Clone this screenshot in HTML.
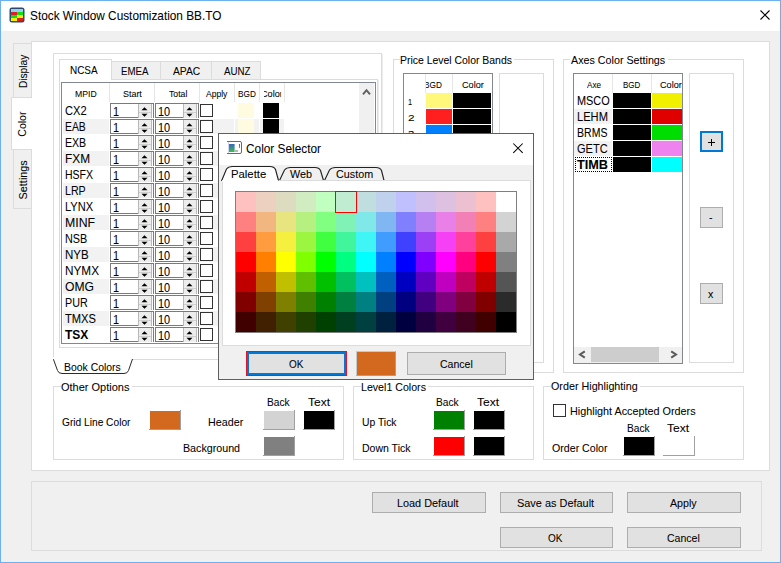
<!DOCTYPE html>
<html><head><meta charset="utf-8">
<style>
html,body{margin:0;padding:0;width:781px;height:563px;overflow:hidden;background:#fff;}
.a{position:absolute;box-sizing:border-box;}
.t{font-family:"Liberation Sans", sans-serif;white-space:nowrap;color:#000;-webkit-text-stroke:0.06px currentColor;}
svg.a{overflow:visible;}
</style></head><body>
<div class="a" style="left:0px;top:0px;width:781px;height:563px;background:#ffffff;border:1px solid #6cb0f2;"></div>
<div class="a" style="left:1px;top:31px;width:779px;height:531px;background:#f0f0f0;"></div>
<svg class="a" style="left:9px;top:7px" width="16" height="16" viewBox="0 0 16 16">
<rect x="0.5" y="0.5" width="15" height="15" rx="2.5" fill="#2b4a6b"/>
<rect x="2" y="2" width="12" height="3" fill="#8fd3ee"/>
<rect x="2" y="5" width="6" height="3" fill="#e02020"/><rect x="8" y="5" width="6" height="3" fill="#10e010"/>
<rect x="2" y="8" width="6" height="3" fill="#10e010"/><rect x="8" y="8" width="6" height="3" fill="#f8f000"/>
<rect x="2" y="11" width="6" height="3" fill="#f8f000"/><rect x="8" y="11" width="6" height="3" fill="#d02020"/>
</svg>
<div class="a t" style="left:29.72px;top:8px;font-size:12.6px;line-height:16px;color:#000;transform:scaleX(0.9377);transform-origin:0 0;">Stock Window Customization BB.TO</div>
<svg class="a" style="left:759px;top:9px" width="12" height="12" viewBox="0 0 12 12">
<path d="M1.5 1.5 L10.5 10.5 M10.5 1.5 L1.5 10.5" stroke="#000" stroke-width="1.1" fill="none"/></svg>
<div class="a" style="left:31px;top:41px;width:739px;height:430px;background:#ffffff;border:1px solid #dcdcdc;"></div>
<div class="a" style="left:13px;top:43px;width:19px;height:55px;background:#f0f0f0;border:1px solid #dcdcdc;"></div>
<div class="a" style="left:13px;top:149px;width:19px;height:60px;background:#f0f0f0;border:1px solid #dcdcdc;"></div>
<div class="a" style="left:11px;top:97px;width:21px;height:53px;background:#ffffff;border:1px solid #dcdcdc;border-right:none;"></div>
<div class="a t" style="left:0;top:0;font-size:11px;line-height:13.75px;transform:translate(16.61px,88.01px) rotate(-90deg) scaleX(0.9205);transform-origin:0 0;">Display</div>
<div class="a t" style="left:0;top:0;font-size:11px;line-height:13.75px;transform:translate(16.41px,136.73px) rotate(-90deg) scaleX(0.9600);transform-origin:0 0;">Color</div>
<div class="a t" style="left:0;top:0;font-size:11px;line-height:13.75px;transform:translate(16.71px,199.39px) rotate(-90deg) scaleX(0.9850);transform-origin:0 0;">Settings</div>
<div class="a" style="left:53px;top:53px;width:329px;height:307px;background:#ffffff;border:1px solid #dcdcdc;"></div>
<div class="a" style="left:382px;top:54px;width:1px;height:306px;background:#ececec;"></div>
<svg class="a" style="left:50px;top:357px" width="90" height="20" viewBox="0 0 90 20">
<path d="M3.5 2 L3.5 2.5 L7.5 13.5 Q8.5 16.5 12 16.5 L74 16.5 Q77.5 16.5 78.5 13.5 L82.5 2" fill="#fff" stroke="#2a2a2a" stroke-width="1"/>
<rect x="3" y="0" width="80" height="2" fill="#fff"/>
</svg>
<div class="a" style="left:54px;top:359px;width:29px;height:1px;background:#ffffff;"></div>
<div class="a t" style="left:63.67px;top:360px;font-size:11.2px;line-height:14px;color:#000;transform:scaleX(0.9314);transform-origin:0 0;">Book Colors</div>
<div class="a" style="left:59px;top:79px;width:319px;height:269px;background:#ffffff;border:1px solid #dcdcdc;"></div>
<div class="a" style="left:378px;top:80px;width:1px;height:268px;background:#ececec;"></div>
<div class="a" style="left:111px;top:61px;width:50px;height:19px;background:#f0f0f0;border:1px solid #dcdcdc;"></div>
<div class="a" style="left:160px;top:61px;width:52px;height:19px;background:#f0f0f0;border:1px solid #dcdcdc;"></div>
<div class="a" style="left:211px;top:61px;width:50px;height:19px;background:#f0f0f0;border:1px solid #dcdcdc;"></div>
<div class="a" style="left:59px;top:59px;width:53px;height:21px;background:#ffffff;border:1px solid #dcdcdc;border-bottom:none;"></div>
<div class="a t" style="left:69.70px;top:63px;font-size:11.2px;line-height:14px;color:#000;transform:scaleX(0.8879);transform-origin:0 0;">NCSA</div>
<div class="a t" style="left:120.72px;top:64px;font-size:11.2px;line-height:14px;color:#000;transform:scaleX(0.8669);transform-origin:0 0;">EMEA</div>
<div class="a t" style="left:172.70px;top:64px;font-size:11.2px;line-height:14px;color:#000;transform:scaleX(0.9202);transform-origin:0 0;">APAC</div>
<div class="a t" style="left:223.90px;top:64px;font-size:11.2px;line-height:14px;color:#000;transform:scaleX(0.8696);transform-origin:0 0;">AUNZ</div>
<div class="a" style="left:61px;top:82px;width:315px;height:262px;background:#ffffff;border:1px solid #828790;"></div>
<div class="a" style="left:109px;top:83px;width:1px;height:19px;background:#e6e6e6;"></div>
<div class="a" style="left:154px;top:83px;width:1px;height:19px;background:#e6e6e6;"></div>
<div class="a" style="left:199px;top:83px;width:1px;height:19px;background:#e6e6e6;"></div>
<div class="a" style="left:234px;top:83px;width:1px;height:19px;background:#e6e6e6;"></div>
<div class="a" style="left:259px;top:83px;width:1px;height:19px;background:#e6e6e6;"></div>
<div class="a" style="left:284px;top:83px;width:1px;height:19px;background:#e6e6e6;"></div>
<div class="a t" style="left:74.81px;top:88px;font-size:9.6px;line-height:12px;color:#000;transform:scaleX(0.9035);transform-origin:0 0;">MPID</div>
<div class="a t" style="left:122.90px;top:88px;font-size:9.6px;line-height:12px;color:#000;transform:scaleX(0.9304);transform-origin:0 0;">Start</div>
<div class="a t" style="left:168.83px;top:88px;font-size:9.6px;line-height:12px;color:#000;transform:scaleX(0.9053);transform-origin:0 0;">Total</div>
<div class="a t" style="left:206.30px;top:88px;font-size:9.6px;line-height:12px;color:#000;transform:scaleX(0.8917);transform-origin:0 0;">Apply</div>
<div class="a t" style="left:238.44px;top:88px;font-size:9.6px;line-height:12px;color:#000;transform:scaleX(0.8578);transform-origin:0 0;">BGD</div>
<div class="a" style="left:264px;top:83px;width:17px;height:18px;overflow:hidden">
<div class="a t" style="left:-2.86px;top:5px;font-size:9.6px;line-height:12px;color:#000;transform:scaleX(0.9519);transform-origin:0 0;">Color</div>
</div>
<div class="a t" style="left:65.04px;top:103px;font-size:12.6px;line-height:16px;color:#000;transform:scaleX(0.8818);transform-origin:0 0;">CX2</div>
<div class="a" style="left:110px;top:103px;width:44px;height:15px;background:#ffffff;border:1px solid #7a7a7a;border-bottom:none;"></div>
<div class="a" style="left:110px;top:117px;width:28px;height:1px;background:#7a7a7a;"></div>
<div class="a t" style="left:112.78px;top:104px;font-size:12.4px;line-height:16px;color:#000;transform:scaleX(0.8800);transform-origin:0 0;">1</div>
<div class="a" style="left:138px;top:104px;width:1px;height:14px;background:#b9b9b9;"></div>
<div class="a" style="left:139px;top:104px;width:12px;height:14px;background:#ededed;"></div>
<div class="a" style="left:151px;top:104px;width:1px;height:14px;background:#b9b9b9;"></div>
<div class="a" style="left:139px;top:112px;width:12px;height:1px;background:#d0d0d0;"></div>
<svg class="a" style="left:141px;top:107px" width="7" height="11" viewBox="0 0 7 11"><path d="M0.5 3.2 L3.5 0.2 L6.5 3.2 Z M0.5 6.8 L3.5 9.8 L6.5 6.8 Z" fill="#000"/></svg>
<div class="a" style="left:155px;top:103px;width:44px;height:15px;background:#ffffff;border:1px solid #7a7a7a;border-bottom:none;"></div>
<div class="a" style="left:155px;top:117px;width:28px;height:1px;background:#7a7a7a;"></div>
<div class="a t" style="left:157.78px;top:104px;font-size:12.4px;line-height:16px;color:#000;transform:scaleX(0.8800);transform-origin:0 0;">10</div>
<div class="a" style="left:183px;top:104px;width:1px;height:14px;background:#b9b9b9;"></div>
<div class="a" style="left:184px;top:104px;width:12px;height:14px;background:#ededed;"></div>
<div class="a" style="left:196px;top:104px;width:1px;height:14px;background:#b9b9b9;"></div>
<div class="a" style="left:184px;top:112px;width:12px;height:1px;background:#d0d0d0;"></div>
<svg class="a" style="left:186px;top:107px" width="7" height="11" viewBox="0 0 7 11"><path d="M0.5 3.2 L3.5 0.2 L6.5 3.2 Z M0.5 6.8 L3.5 9.8 L6.5 6.8 Z" fill="#000"/></svg>
<div class="a" style="left:200px;top:104px;width:13px;height:13px;background:#ffffff;border:1px solid #333333;"></div>
<div class="a" style="left:238px;top:103px;width:16px;height:15px;background:#fffbe1;"></div>
<div class="a" style="left:263px;top:103px;width:16px;height:15px;background:#000000;"></div>
<div class="a" style="left:63px;top:119px;width:221px;height:15px;background:#f2f2f2;"></div>
<div class="a" style="left:109px;top:119px;width:1px;height:15px;background:#ffffff;"></div>
<div class="a" style="left:154px;top:119px;width:1px;height:15px;background:#ffffff;"></div>
<div class="a" style="left:199px;top:119px;width:1px;height:15px;background:#ffffff;"></div>
<div class="a" style="left:234px;top:119px;width:1px;height:15px;background:#ffffff;"></div>
<div class="a" style="left:259px;top:119px;width:1px;height:15px;background:#ffffff;"></div>
<div class="a t" style="left:64.77px;top:119px;font-size:12.6px;line-height:16px;color:#000;transform:scaleX(0.8234);transform-origin:0 0;">EAB</div>
<div class="a" style="left:110px;top:119px;width:44px;height:15px;background:#ffffff;border:1px solid #7a7a7a;border-bottom:none;"></div>
<div class="a" style="left:110px;top:133px;width:28px;height:1px;background:#7a7a7a;"></div>
<div class="a t" style="left:112.78px;top:120px;font-size:12.4px;line-height:16px;color:#000;transform:scaleX(0.8800);transform-origin:0 0;">1</div>
<div class="a" style="left:138px;top:120px;width:1px;height:14px;background:#b9b9b9;"></div>
<div class="a" style="left:139px;top:120px;width:12px;height:14px;background:#ededed;"></div>
<div class="a" style="left:151px;top:120px;width:1px;height:14px;background:#b9b9b9;"></div>
<div class="a" style="left:139px;top:128px;width:12px;height:1px;background:#d0d0d0;"></div>
<svg class="a" style="left:141px;top:123px" width="7" height="11" viewBox="0 0 7 11"><path d="M0.5 3.2 L3.5 0.2 L6.5 3.2 Z M0.5 6.8 L3.5 9.8 L6.5 6.8 Z" fill="#000"/></svg>
<div class="a" style="left:155px;top:119px;width:44px;height:15px;background:#ffffff;border:1px solid #7a7a7a;border-bottom:none;"></div>
<div class="a" style="left:155px;top:133px;width:28px;height:1px;background:#7a7a7a;"></div>
<div class="a t" style="left:157.78px;top:120px;font-size:12.4px;line-height:16px;color:#000;transform:scaleX(0.8800);transform-origin:0 0;">10</div>
<div class="a" style="left:183px;top:120px;width:1px;height:14px;background:#b9b9b9;"></div>
<div class="a" style="left:184px;top:120px;width:12px;height:14px;background:#ededed;"></div>
<div class="a" style="left:196px;top:120px;width:1px;height:14px;background:#b9b9b9;"></div>
<div class="a" style="left:184px;top:128px;width:12px;height:1px;background:#d0d0d0;"></div>
<svg class="a" style="left:186px;top:123px" width="7" height="11" viewBox="0 0 7 11"><path d="M0.5 3.2 L3.5 0.2 L6.5 3.2 Z M0.5 6.8 L3.5 9.8 L6.5 6.8 Z" fill="#000"/></svg>
<div class="a" style="left:200px;top:120px;width:13px;height:13px;background:#ffffff;border:1px solid #333333;"></div>
<div class="a" style="left:238px;top:119px;width:16px;height:15px;background:#fffbe1;"></div>
<div class="a" style="left:263px;top:119px;width:16px;height:15px;background:#000000;"></div>
<div class="a t" style="left:64.75px;top:135px;font-size:12.6px;line-height:16px;color:#000;transform:scaleX(0.8403);transform-origin:0 0;">EXB</div>
<div class="a" style="left:110px;top:135px;width:44px;height:15px;background:#ffffff;border:1px solid #7a7a7a;border-bottom:none;"></div>
<div class="a" style="left:110px;top:149px;width:28px;height:1px;background:#7a7a7a;"></div>
<div class="a t" style="left:112.78px;top:136px;font-size:12.4px;line-height:16px;color:#000;transform:scaleX(0.8800);transform-origin:0 0;">1</div>
<div class="a" style="left:138px;top:136px;width:1px;height:14px;background:#b9b9b9;"></div>
<div class="a" style="left:139px;top:136px;width:12px;height:14px;background:#ededed;"></div>
<div class="a" style="left:151px;top:136px;width:1px;height:14px;background:#b9b9b9;"></div>
<div class="a" style="left:139px;top:144px;width:12px;height:1px;background:#d0d0d0;"></div>
<svg class="a" style="left:141px;top:139px" width="7" height="11" viewBox="0 0 7 11"><path d="M0.5 3.2 L3.5 0.2 L6.5 3.2 Z M0.5 6.8 L3.5 9.8 L6.5 6.8 Z" fill="#000"/></svg>
<div class="a" style="left:155px;top:135px;width:44px;height:15px;background:#ffffff;border:1px solid #7a7a7a;border-bottom:none;"></div>
<div class="a" style="left:155px;top:149px;width:28px;height:1px;background:#7a7a7a;"></div>
<div class="a t" style="left:157.78px;top:136px;font-size:12.4px;line-height:16px;color:#000;transform:scaleX(0.8800);transform-origin:0 0;">10</div>
<div class="a" style="left:183px;top:136px;width:1px;height:14px;background:#b9b9b9;"></div>
<div class="a" style="left:184px;top:136px;width:12px;height:14px;background:#ededed;"></div>
<div class="a" style="left:196px;top:136px;width:1px;height:14px;background:#b9b9b9;"></div>
<div class="a" style="left:184px;top:144px;width:12px;height:1px;background:#d0d0d0;"></div>
<svg class="a" style="left:186px;top:139px" width="7" height="11" viewBox="0 0 7 11"><path d="M0.5 3.2 L3.5 0.2 L6.5 3.2 Z M0.5 6.8 L3.5 9.8 L6.5 6.8 Z" fill="#000"/></svg>
<div class="a" style="left:200px;top:136px;width:13px;height:13px;background:#ffffff;border:1px solid #333333;"></div>
<div class="a" style="left:238px;top:135px;width:16px;height:15px;background:#fffbe1;"></div>
<div class="a" style="left:263px;top:135px;width:16px;height:15px;background:#000000;"></div>
<div class="a" style="left:63px;top:151px;width:221px;height:15px;background:#f2f2f2;"></div>
<div class="a" style="left:109px;top:151px;width:1px;height:15px;background:#ffffff;"></div>
<div class="a" style="left:154px;top:151px;width:1px;height:15px;background:#ffffff;"></div>
<div class="a" style="left:199px;top:151px;width:1px;height:15px;background:#ffffff;"></div>
<div class="a" style="left:234px;top:151px;width:1px;height:15px;background:#ffffff;"></div>
<div class="a" style="left:259px;top:151px;width:1px;height:15px;background:#ffffff;"></div>
<div class="a t" style="left:64.65px;top:151px;font-size:12.6px;line-height:16px;color:#000;transform:scaleX(0.9402);transform-origin:0 0;">FXM</div>
<div class="a" style="left:110px;top:151px;width:44px;height:15px;background:#ffffff;border:1px solid #7a7a7a;border-bottom:none;"></div>
<div class="a" style="left:110px;top:165px;width:28px;height:1px;background:#7a7a7a;"></div>
<div class="a t" style="left:112.78px;top:152px;font-size:12.4px;line-height:16px;color:#000;transform:scaleX(0.8800);transform-origin:0 0;">1</div>
<div class="a" style="left:138px;top:152px;width:1px;height:14px;background:#b9b9b9;"></div>
<div class="a" style="left:139px;top:152px;width:12px;height:14px;background:#ededed;"></div>
<div class="a" style="left:151px;top:152px;width:1px;height:14px;background:#b9b9b9;"></div>
<div class="a" style="left:139px;top:160px;width:12px;height:1px;background:#d0d0d0;"></div>
<svg class="a" style="left:141px;top:155px" width="7" height="11" viewBox="0 0 7 11"><path d="M0.5 3.2 L3.5 0.2 L6.5 3.2 Z M0.5 6.8 L3.5 9.8 L6.5 6.8 Z" fill="#000"/></svg>
<div class="a" style="left:155px;top:151px;width:44px;height:15px;background:#ffffff;border:1px solid #7a7a7a;border-bottom:none;"></div>
<div class="a" style="left:155px;top:165px;width:28px;height:1px;background:#7a7a7a;"></div>
<div class="a t" style="left:157.78px;top:152px;font-size:12.4px;line-height:16px;color:#000;transform:scaleX(0.8800);transform-origin:0 0;">10</div>
<div class="a" style="left:183px;top:152px;width:1px;height:14px;background:#b9b9b9;"></div>
<div class="a" style="left:184px;top:152px;width:12px;height:14px;background:#ededed;"></div>
<div class="a" style="left:196px;top:152px;width:1px;height:14px;background:#b9b9b9;"></div>
<div class="a" style="left:184px;top:160px;width:12px;height:1px;background:#d0d0d0;"></div>
<svg class="a" style="left:186px;top:155px" width="7" height="11" viewBox="0 0 7 11"><path d="M0.5 3.2 L3.5 0.2 L6.5 3.2 Z M0.5 6.8 L3.5 9.8 L6.5 6.8 Z" fill="#000"/></svg>
<div class="a" style="left:200px;top:152px;width:13px;height:13px;background:#ffffff;border:1px solid #333333;"></div>
<div class="a" style="left:238px;top:151px;width:16px;height:15px;background:#fffbe1;"></div>
<div class="a" style="left:263px;top:151px;width:16px;height:15px;background:#000000;"></div>
<div class="a t" style="left:64.76px;top:167px;font-size:12.6px;line-height:16px;color:#000;transform:scaleX(0.8354);transform-origin:0 0;">HSFX</div>
<div class="a" style="left:110px;top:167px;width:44px;height:15px;background:#ffffff;border:1px solid #7a7a7a;border-bottom:none;"></div>
<div class="a" style="left:110px;top:181px;width:28px;height:1px;background:#7a7a7a;"></div>
<div class="a t" style="left:112.78px;top:168px;font-size:12.4px;line-height:16px;color:#000;transform:scaleX(0.8800);transform-origin:0 0;">1</div>
<div class="a" style="left:138px;top:168px;width:1px;height:14px;background:#b9b9b9;"></div>
<div class="a" style="left:139px;top:168px;width:12px;height:14px;background:#ededed;"></div>
<div class="a" style="left:151px;top:168px;width:1px;height:14px;background:#b9b9b9;"></div>
<div class="a" style="left:139px;top:176px;width:12px;height:1px;background:#d0d0d0;"></div>
<svg class="a" style="left:141px;top:171px" width="7" height="11" viewBox="0 0 7 11"><path d="M0.5 3.2 L3.5 0.2 L6.5 3.2 Z M0.5 6.8 L3.5 9.8 L6.5 6.8 Z" fill="#000"/></svg>
<div class="a" style="left:155px;top:167px;width:44px;height:15px;background:#ffffff;border:1px solid #7a7a7a;border-bottom:none;"></div>
<div class="a" style="left:155px;top:181px;width:28px;height:1px;background:#7a7a7a;"></div>
<div class="a t" style="left:157.78px;top:168px;font-size:12.4px;line-height:16px;color:#000;transform:scaleX(0.8800);transform-origin:0 0;">10</div>
<div class="a" style="left:183px;top:168px;width:1px;height:14px;background:#b9b9b9;"></div>
<div class="a" style="left:184px;top:168px;width:12px;height:14px;background:#ededed;"></div>
<div class="a" style="left:196px;top:168px;width:1px;height:14px;background:#b9b9b9;"></div>
<div class="a" style="left:184px;top:176px;width:12px;height:1px;background:#d0d0d0;"></div>
<svg class="a" style="left:186px;top:171px" width="7" height="11" viewBox="0 0 7 11"><path d="M0.5 3.2 L3.5 0.2 L6.5 3.2 Z M0.5 6.8 L3.5 9.8 L6.5 6.8 Z" fill="#000"/></svg>
<div class="a" style="left:200px;top:168px;width:13px;height:13px;background:#ffffff;border:1px solid #333333;"></div>
<div class="a" style="left:238px;top:167px;width:16px;height:15px;background:#fffbe1;"></div>
<div class="a" style="left:263px;top:167px;width:16px;height:15px;background:#000000;"></div>
<div class="a" style="left:63px;top:183px;width:221px;height:15px;background:#f2f2f2;"></div>
<div class="a" style="left:109px;top:183px;width:1px;height:15px;background:#ffffff;"></div>
<div class="a" style="left:154px;top:183px;width:1px;height:15px;background:#ffffff;"></div>
<div class="a" style="left:199px;top:183px;width:1px;height:15px;background:#ffffff;"></div>
<div class="a" style="left:234px;top:183px;width:1px;height:15px;background:#ffffff;"></div>
<div class="a" style="left:259px;top:183px;width:1px;height:15px;background:#ffffff;"></div>
<div class="a t" style="left:64.75px;top:183px;font-size:12.6px;line-height:16px;color:#000;transform:scaleX(0.8439);transform-origin:0 0;">LRP</div>
<div class="a" style="left:110px;top:183px;width:44px;height:15px;background:#ffffff;border:1px solid #7a7a7a;border-bottom:none;"></div>
<div class="a" style="left:110px;top:197px;width:28px;height:1px;background:#7a7a7a;"></div>
<div class="a t" style="left:112.78px;top:184px;font-size:12.4px;line-height:16px;color:#000;transform:scaleX(0.8800);transform-origin:0 0;">1</div>
<div class="a" style="left:138px;top:184px;width:1px;height:14px;background:#b9b9b9;"></div>
<div class="a" style="left:139px;top:184px;width:12px;height:14px;background:#ededed;"></div>
<div class="a" style="left:151px;top:184px;width:1px;height:14px;background:#b9b9b9;"></div>
<div class="a" style="left:139px;top:192px;width:12px;height:1px;background:#d0d0d0;"></div>
<svg class="a" style="left:141px;top:187px" width="7" height="11" viewBox="0 0 7 11"><path d="M0.5 3.2 L3.5 0.2 L6.5 3.2 Z M0.5 6.8 L3.5 9.8 L6.5 6.8 Z" fill="#000"/></svg>
<div class="a" style="left:155px;top:183px;width:44px;height:15px;background:#ffffff;border:1px solid #7a7a7a;border-bottom:none;"></div>
<div class="a" style="left:155px;top:197px;width:28px;height:1px;background:#7a7a7a;"></div>
<div class="a t" style="left:157.78px;top:184px;font-size:12.4px;line-height:16px;color:#000;transform:scaleX(0.8800);transform-origin:0 0;">10</div>
<div class="a" style="left:183px;top:184px;width:1px;height:14px;background:#b9b9b9;"></div>
<div class="a" style="left:184px;top:184px;width:12px;height:14px;background:#ededed;"></div>
<div class="a" style="left:196px;top:184px;width:1px;height:14px;background:#b9b9b9;"></div>
<div class="a" style="left:184px;top:192px;width:12px;height:1px;background:#d0d0d0;"></div>
<svg class="a" style="left:186px;top:187px" width="7" height="11" viewBox="0 0 7 11"><path d="M0.5 3.2 L3.5 0.2 L6.5 3.2 Z M0.5 6.8 L3.5 9.8 L6.5 6.8 Z" fill="#000"/></svg>
<div class="a" style="left:200px;top:184px;width:13px;height:13px;background:#ffffff;border:1px solid #333333;"></div>
<div class="a" style="left:238px;top:183px;width:16px;height:15px;background:#fffbe1;"></div>
<div class="a" style="left:263px;top:183px;width:16px;height:15px;background:#000000;"></div>
<div class="a t" style="left:64.71px;top:199px;font-size:12.6px;line-height:16px;color:#000;transform:scaleX(0.8800);transform-origin:0 0;">LYNX</div>
<div class="a" style="left:110px;top:199px;width:44px;height:15px;background:#ffffff;border:1px solid #7a7a7a;border-bottom:none;"></div>
<div class="a" style="left:110px;top:213px;width:28px;height:1px;background:#7a7a7a;"></div>
<div class="a t" style="left:112.78px;top:200px;font-size:12.4px;line-height:16px;color:#000;transform:scaleX(0.8800);transform-origin:0 0;">1</div>
<div class="a" style="left:138px;top:200px;width:1px;height:14px;background:#b9b9b9;"></div>
<div class="a" style="left:139px;top:200px;width:12px;height:14px;background:#ededed;"></div>
<div class="a" style="left:151px;top:200px;width:1px;height:14px;background:#b9b9b9;"></div>
<div class="a" style="left:139px;top:208px;width:12px;height:1px;background:#d0d0d0;"></div>
<svg class="a" style="left:141px;top:203px" width="7" height="11" viewBox="0 0 7 11"><path d="M0.5 3.2 L3.5 0.2 L6.5 3.2 Z M0.5 6.8 L3.5 9.8 L6.5 6.8 Z" fill="#000"/></svg>
<div class="a" style="left:155px;top:199px;width:44px;height:15px;background:#ffffff;border:1px solid #7a7a7a;border-bottom:none;"></div>
<div class="a" style="left:155px;top:213px;width:28px;height:1px;background:#7a7a7a;"></div>
<div class="a t" style="left:157.78px;top:200px;font-size:12.4px;line-height:16px;color:#000;transform:scaleX(0.8800);transform-origin:0 0;">10</div>
<div class="a" style="left:183px;top:200px;width:1px;height:14px;background:#b9b9b9;"></div>
<div class="a" style="left:184px;top:200px;width:12px;height:14px;background:#ededed;"></div>
<div class="a" style="left:196px;top:200px;width:1px;height:14px;background:#b9b9b9;"></div>
<div class="a" style="left:184px;top:208px;width:12px;height:1px;background:#d0d0d0;"></div>
<svg class="a" style="left:186px;top:203px" width="7" height="11" viewBox="0 0 7 11"><path d="M0.5 3.2 L3.5 0.2 L6.5 3.2 Z M0.5 6.8 L3.5 9.8 L6.5 6.8 Z" fill="#000"/></svg>
<div class="a" style="left:200px;top:200px;width:13px;height:13px;background:#ffffff;border:1px solid #333333;"></div>
<div class="a" style="left:238px;top:199px;width:16px;height:15px;background:#fffbe1;"></div>
<div class="a" style="left:263px;top:199px;width:16px;height:15px;background:#000000;"></div>
<div class="a" style="left:63px;top:215px;width:221px;height:15px;background:#f2f2f2;"></div>
<div class="a" style="left:109px;top:215px;width:1px;height:15px;background:#ffffff;"></div>
<div class="a" style="left:154px;top:215px;width:1px;height:15px;background:#ffffff;"></div>
<div class="a" style="left:199px;top:215px;width:1px;height:15px;background:#ffffff;"></div>
<div class="a" style="left:234px;top:215px;width:1px;height:15px;background:#ffffff;"></div>
<div class="a" style="left:259px;top:215px;width:1px;height:15px;background:#ffffff;"></div>
<div class="a t" style="left:64.62px;top:215px;font-size:12.6px;line-height:16px;color:#000;transform:scaleX(0.9763);transform-origin:0 0;">MINF</div>
<div class="a" style="left:110px;top:215px;width:44px;height:15px;background:#ffffff;border:1px solid #7a7a7a;border-bottom:none;"></div>
<div class="a" style="left:110px;top:229px;width:28px;height:1px;background:#7a7a7a;"></div>
<div class="a t" style="left:112.78px;top:216px;font-size:12.4px;line-height:16px;color:#000;transform:scaleX(0.8800);transform-origin:0 0;">1</div>
<div class="a" style="left:138px;top:216px;width:1px;height:14px;background:#b9b9b9;"></div>
<div class="a" style="left:139px;top:216px;width:12px;height:14px;background:#ededed;"></div>
<div class="a" style="left:151px;top:216px;width:1px;height:14px;background:#b9b9b9;"></div>
<div class="a" style="left:139px;top:224px;width:12px;height:1px;background:#d0d0d0;"></div>
<svg class="a" style="left:141px;top:219px" width="7" height="11" viewBox="0 0 7 11"><path d="M0.5 3.2 L3.5 0.2 L6.5 3.2 Z M0.5 6.8 L3.5 9.8 L6.5 6.8 Z" fill="#000"/></svg>
<div class="a" style="left:155px;top:215px;width:44px;height:15px;background:#ffffff;border:1px solid #7a7a7a;border-bottom:none;"></div>
<div class="a" style="left:155px;top:229px;width:28px;height:1px;background:#7a7a7a;"></div>
<div class="a t" style="left:157.78px;top:216px;font-size:12.4px;line-height:16px;color:#000;transform:scaleX(0.8800);transform-origin:0 0;">10</div>
<div class="a" style="left:183px;top:216px;width:1px;height:14px;background:#b9b9b9;"></div>
<div class="a" style="left:184px;top:216px;width:12px;height:14px;background:#ededed;"></div>
<div class="a" style="left:196px;top:216px;width:1px;height:14px;background:#b9b9b9;"></div>
<div class="a" style="left:184px;top:224px;width:12px;height:1px;background:#d0d0d0;"></div>
<svg class="a" style="left:186px;top:219px" width="7" height="11" viewBox="0 0 7 11"><path d="M0.5 3.2 L3.5 0.2 L6.5 3.2 Z M0.5 6.8 L3.5 9.8 L6.5 6.8 Z" fill="#000"/></svg>
<div class="a" style="left:200px;top:216px;width:13px;height:13px;background:#ffffff;border:1px solid #333333;"></div>
<div class="a" style="left:238px;top:215px;width:16px;height:15px;background:#fffbe1;"></div>
<div class="a" style="left:263px;top:215px;width:16px;height:15px;background:#000000;"></div>
<div class="a t" style="left:64.74px;top:231px;font-size:12.6px;line-height:16px;color:#000;transform:scaleX(0.8576);transform-origin:0 0;">NSB</div>
<div class="a" style="left:110px;top:231px;width:44px;height:15px;background:#ffffff;border:1px solid #7a7a7a;border-bottom:none;"></div>
<div class="a" style="left:110px;top:245px;width:28px;height:1px;background:#7a7a7a;"></div>
<div class="a t" style="left:112.78px;top:232px;font-size:12.4px;line-height:16px;color:#000;transform:scaleX(0.8800);transform-origin:0 0;">1</div>
<div class="a" style="left:138px;top:232px;width:1px;height:14px;background:#b9b9b9;"></div>
<div class="a" style="left:139px;top:232px;width:12px;height:14px;background:#ededed;"></div>
<div class="a" style="left:151px;top:232px;width:1px;height:14px;background:#b9b9b9;"></div>
<div class="a" style="left:139px;top:240px;width:12px;height:1px;background:#d0d0d0;"></div>
<svg class="a" style="left:141px;top:235px" width="7" height="11" viewBox="0 0 7 11"><path d="M0.5 3.2 L3.5 0.2 L6.5 3.2 Z M0.5 6.8 L3.5 9.8 L6.5 6.8 Z" fill="#000"/></svg>
<div class="a" style="left:155px;top:231px;width:44px;height:15px;background:#ffffff;border:1px solid #7a7a7a;border-bottom:none;"></div>
<div class="a" style="left:155px;top:245px;width:28px;height:1px;background:#7a7a7a;"></div>
<div class="a t" style="left:157.78px;top:232px;font-size:12.4px;line-height:16px;color:#000;transform:scaleX(0.8800);transform-origin:0 0;">10</div>
<div class="a" style="left:183px;top:232px;width:1px;height:14px;background:#b9b9b9;"></div>
<div class="a" style="left:184px;top:232px;width:12px;height:14px;background:#ededed;"></div>
<div class="a" style="left:196px;top:232px;width:1px;height:14px;background:#b9b9b9;"></div>
<div class="a" style="left:184px;top:240px;width:12px;height:1px;background:#d0d0d0;"></div>
<svg class="a" style="left:186px;top:235px" width="7" height="11" viewBox="0 0 7 11"><path d="M0.5 3.2 L3.5 0.2 L6.5 3.2 Z M0.5 6.8 L3.5 9.8 L6.5 6.8 Z" fill="#000"/></svg>
<div class="a" style="left:200px;top:232px;width:13px;height:13px;background:#ffffff;border:1px solid #333333;"></div>
<div class="a" style="left:238px;top:231px;width:16px;height:15px;background:#fffbe1;"></div>
<div class="a" style="left:263px;top:231px;width:16px;height:15px;background:#000000;"></div>
<div class="a" style="left:63px;top:247px;width:221px;height:15px;background:#f2f2f2;"></div>
<div class="a" style="left:109px;top:247px;width:1px;height:15px;background:#ffffff;"></div>
<div class="a" style="left:154px;top:247px;width:1px;height:15px;background:#ffffff;"></div>
<div class="a" style="left:199px;top:247px;width:1px;height:15px;background:#ffffff;"></div>
<div class="a" style="left:234px;top:247px;width:1px;height:15px;background:#ffffff;"></div>
<div class="a" style="left:259px;top:247px;width:1px;height:15px;background:#ffffff;"></div>
<div class="a t" style="left:64.68px;top:247px;font-size:12.6px;line-height:16px;color:#000;transform:scaleX(0.9153);transform-origin:0 0;">NYB</div>
<div class="a" style="left:110px;top:247px;width:44px;height:15px;background:#ffffff;border:1px solid #7a7a7a;border-bottom:none;"></div>
<div class="a" style="left:110px;top:261px;width:28px;height:1px;background:#7a7a7a;"></div>
<div class="a t" style="left:112.78px;top:248px;font-size:12.4px;line-height:16px;color:#000;transform:scaleX(0.8800);transform-origin:0 0;">1</div>
<div class="a" style="left:138px;top:248px;width:1px;height:14px;background:#b9b9b9;"></div>
<div class="a" style="left:139px;top:248px;width:12px;height:14px;background:#ededed;"></div>
<div class="a" style="left:151px;top:248px;width:1px;height:14px;background:#b9b9b9;"></div>
<div class="a" style="left:139px;top:256px;width:12px;height:1px;background:#d0d0d0;"></div>
<svg class="a" style="left:141px;top:251px" width="7" height="11" viewBox="0 0 7 11"><path d="M0.5 3.2 L3.5 0.2 L6.5 3.2 Z M0.5 6.8 L3.5 9.8 L6.5 6.8 Z" fill="#000"/></svg>
<div class="a" style="left:155px;top:247px;width:44px;height:15px;background:#ffffff;border:1px solid #7a7a7a;border-bottom:none;"></div>
<div class="a" style="left:155px;top:261px;width:28px;height:1px;background:#7a7a7a;"></div>
<div class="a t" style="left:157.78px;top:248px;font-size:12.4px;line-height:16px;color:#000;transform:scaleX(0.8800);transform-origin:0 0;">10</div>
<div class="a" style="left:183px;top:248px;width:1px;height:14px;background:#b9b9b9;"></div>
<div class="a" style="left:184px;top:248px;width:12px;height:14px;background:#ededed;"></div>
<div class="a" style="left:196px;top:248px;width:1px;height:14px;background:#b9b9b9;"></div>
<div class="a" style="left:184px;top:256px;width:12px;height:1px;background:#d0d0d0;"></div>
<svg class="a" style="left:186px;top:251px" width="7" height="11" viewBox="0 0 7 11"><path d="M0.5 3.2 L3.5 0.2 L6.5 3.2 Z M0.5 6.8 L3.5 9.8 L6.5 6.8 Z" fill="#000"/></svg>
<div class="a" style="left:200px;top:248px;width:13px;height:13px;background:#ffffff;border:1px solid #333333;"></div>
<div class="a" style="left:238px;top:247px;width:16px;height:15px;background:#fffbe1;"></div>
<div class="a" style="left:263px;top:247px;width:16px;height:15px;background:#000000;"></div>
<div class="a t" style="left:64.66px;top:263px;font-size:12.6px;line-height:16px;color:#000;transform:scaleX(0.9347);transform-origin:0 0;">NYMX</div>
<div class="a" style="left:110px;top:263px;width:44px;height:15px;background:#ffffff;border:1px solid #7a7a7a;border-bottom:none;"></div>
<div class="a" style="left:110px;top:277px;width:28px;height:1px;background:#7a7a7a;"></div>
<div class="a t" style="left:112.78px;top:264px;font-size:12.4px;line-height:16px;color:#000;transform:scaleX(0.8800);transform-origin:0 0;">1</div>
<div class="a" style="left:138px;top:264px;width:1px;height:14px;background:#b9b9b9;"></div>
<div class="a" style="left:139px;top:264px;width:12px;height:14px;background:#ededed;"></div>
<div class="a" style="left:151px;top:264px;width:1px;height:14px;background:#b9b9b9;"></div>
<div class="a" style="left:139px;top:272px;width:12px;height:1px;background:#d0d0d0;"></div>
<svg class="a" style="left:141px;top:267px" width="7" height="11" viewBox="0 0 7 11"><path d="M0.5 3.2 L3.5 0.2 L6.5 3.2 Z M0.5 6.8 L3.5 9.8 L6.5 6.8 Z" fill="#000"/></svg>
<div class="a" style="left:155px;top:263px;width:44px;height:15px;background:#ffffff;border:1px solid #7a7a7a;border-bottom:none;"></div>
<div class="a" style="left:155px;top:277px;width:28px;height:1px;background:#7a7a7a;"></div>
<div class="a t" style="left:157.78px;top:264px;font-size:12.4px;line-height:16px;color:#000;transform:scaleX(0.8800);transform-origin:0 0;">10</div>
<div class="a" style="left:183px;top:264px;width:1px;height:14px;background:#b9b9b9;"></div>
<div class="a" style="left:184px;top:264px;width:12px;height:14px;background:#ededed;"></div>
<div class="a" style="left:196px;top:264px;width:1px;height:14px;background:#b9b9b9;"></div>
<div class="a" style="left:184px;top:272px;width:12px;height:1px;background:#d0d0d0;"></div>
<svg class="a" style="left:186px;top:267px" width="7" height="11" viewBox="0 0 7 11"><path d="M0.5 3.2 L3.5 0.2 L6.5 3.2 Z M0.5 6.8 L3.5 9.8 L6.5 6.8 Z" fill="#000"/></svg>
<div class="a" style="left:200px;top:264px;width:13px;height:13px;background:#ffffff;border:1px solid #333333;"></div>
<div class="a" style="left:238px;top:263px;width:16px;height:15px;background:#fffbe1;"></div>
<div class="a" style="left:263px;top:263px;width:16px;height:15px;background:#000000;"></div>
<div class="a" style="left:63px;top:279px;width:221px;height:15px;background:#f2f2f2;"></div>
<div class="a" style="left:109px;top:279px;width:1px;height:15px;background:#ffffff;"></div>
<div class="a" style="left:154px;top:279px;width:1px;height:15px;background:#ffffff;"></div>
<div class="a" style="left:199px;top:279px;width:1px;height:15px;background:#ffffff;"></div>
<div class="a" style="left:234px;top:279px;width:1px;height:15px;background:#ffffff;"></div>
<div class="a" style="left:259px;top:279px;width:1px;height:15px;background:#ffffff;"></div>
<div class="a t" style="left:65.05px;top:279px;font-size:12.6px;line-height:16px;color:#000;transform:scaleX(0.9615);transform-origin:0 0;">OMG</div>
<div class="a" style="left:110px;top:279px;width:44px;height:15px;background:#ffffff;border:1px solid #7a7a7a;border-bottom:none;"></div>
<div class="a" style="left:110px;top:293px;width:28px;height:1px;background:#7a7a7a;"></div>
<div class="a t" style="left:112.78px;top:280px;font-size:12.4px;line-height:16px;color:#000;transform:scaleX(0.8800);transform-origin:0 0;">1</div>
<div class="a" style="left:138px;top:280px;width:1px;height:14px;background:#b9b9b9;"></div>
<div class="a" style="left:139px;top:280px;width:12px;height:14px;background:#ededed;"></div>
<div class="a" style="left:151px;top:280px;width:1px;height:14px;background:#b9b9b9;"></div>
<div class="a" style="left:139px;top:288px;width:12px;height:1px;background:#d0d0d0;"></div>
<svg class="a" style="left:141px;top:283px" width="7" height="11" viewBox="0 0 7 11"><path d="M0.5 3.2 L3.5 0.2 L6.5 3.2 Z M0.5 6.8 L3.5 9.8 L6.5 6.8 Z" fill="#000"/></svg>
<div class="a" style="left:155px;top:279px;width:44px;height:15px;background:#ffffff;border:1px solid #7a7a7a;border-bottom:none;"></div>
<div class="a" style="left:155px;top:293px;width:28px;height:1px;background:#7a7a7a;"></div>
<div class="a t" style="left:157.78px;top:280px;font-size:12.4px;line-height:16px;color:#000;transform:scaleX(0.8800);transform-origin:0 0;">10</div>
<div class="a" style="left:183px;top:280px;width:1px;height:14px;background:#b9b9b9;"></div>
<div class="a" style="left:184px;top:280px;width:12px;height:14px;background:#ededed;"></div>
<div class="a" style="left:196px;top:280px;width:1px;height:14px;background:#b9b9b9;"></div>
<div class="a" style="left:184px;top:288px;width:12px;height:1px;background:#d0d0d0;"></div>
<svg class="a" style="left:186px;top:283px" width="7" height="11" viewBox="0 0 7 11"><path d="M0.5 3.2 L3.5 0.2 L6.5 3.2 Z M0.5 6.8 L3.5 9.8 L6.5 6.8 Z" fill="#000"/></svg>
<div class="a" style="left:200px;top:280px;width:13px;height:13px;background:#ffffff;border:1px solid #333333;"></div>
<div class="a" style="left:238px;top:279px;width:16px;height:15px;background:#fffbe1;"></div>
<div class="a" style="left:263px;top:279px;width:16px;height:15px;background:#000000;"></div>
<div class="a t" style="left:64.74px;top:295px;font-size:12.6px;line-height:16px;color:#000;transform:scaleX(0.8516);transform-origin:0 0;">PUR</div>
<div class="a" style="left:110px;top:295px;width:44px;height:15px;background:#ffffff;border:1px solid #7a7a7a;border-bottom:none;"></div>
<div class="a" style="left:110px;top:309px;width:28px;height:1px;background:#7a7a7a;"></div>
<div class="a t" style="left:112.78px;top:296px;font-size:12.4px;line-height:16px;color:#000;transform:scaleX(0.8800);transform-origin:0 0;">1</div>
<div class="a" style="left:138px;top:296px;width:1px;height:14px;background:#b9b9b9;"></div>
<div class="a" style="left:139px;top:296px;width:12px;height:14px;background:#ededed;"></div>
<div class="a" style="left:151px;top:296px;width:1px;height:14px;background:#b9b9b9;"></div>
<div class="a" style="left:139px;top:304px;width:12px;height:1px;background:#d0d0d0;"></div>
<svg class="a" style="left:141px;top:299px" width="7" height="11" viewBox="0 0 7 11"><path d="M0.5 3.2 L3.5 0.2 L6.5 3.2 Z M0.5 6.8 L3.5 9.8 L6.5 6.8 Z" fill="#000"/></svg>
<div class="a" style="left:155px;top:295px;width:44px;height:15px;background:#ffffff;border:1px solid #7a7a7a;border-bottom:none;"></div>
<div class="a" style="left:155px;top:309px;width:28px;height:1px;background:#7a7a7a;"></div>
<div class="a t" style="left:157.78px;top:296px;font-size:12.4px;line-height:16px;color:#000;transform:scaleX(0.8800);transform-origin:0 0;">10</div>
<div class="a" style="left:183px;top:296px;width:1px;height:14px;background:#b9b9b9;"></div>
<div class="a" style="left:184px;top:296px;width:12px;height:14px;background:#ededed;"></div>
<div class="a" style="left:196px;top:296px;width:1px;height:14px;background:#b9b9b9;"></div>
<div class="a" style="left:184px;top:304px;width:12px;height:1px;background:#d0d0d0;"></div>
<svg class="a" style="left:186px;top:299px" width="7" height="11" viewBox="0 0 7 11"><path d="M0.5 3.2 L3.5 0.2 L6.5 3.2 Z M0.5 6.8 L3.5 9.8 L6.5 6.8 Z" fill="#000"/></svg>
<div class="a" style="left:200px;top:296px;width:13px;height:13px;background:#ffffff;border:1px solid #333333;"></div>
<div class="a" style="left:238px;top:295px;width:16px;height:15px;background:#fffbe1;"></div>
<div class="a" style="left:263px;top:295px;width:16px;height:15px;background:#000000;"></div>
<div class="a" style="left:63px;top:311px;width:221px;height:15px;background:#f2f2f2;"></div>
<div class="a" style="left:109px;top:311px;width:1px;height:15px;background:#ffffff;"></div>
<div class="a" style="left:154px;top:311px;width:1px;height:15px;background:#ffffff;"></div>
<div class="a" style="left:199px;top:311px;width:1px;height:15px;background:#ffffff;"></div>
<div class="a" style="left:234px;top:311px;width:1px;height:15px;background:#ffffff;"></div>
<div class="a" style="left:259px;top:311px;width:1px;height:15px;background:#ffffff;"></div>
<div class="a t" style="left:65.38px;top:311px;font-size:12.6px;line-height:16px;color:#000;transform:scaleX(0.8844);transform-origin:0 0;">TMXS</div>
<div class="a" style="left:110px;top:311px;width:44px;height:15px;background:#ffffff;border:1px solid #7a7a7a;border-bottom:none;"></div>
<div class="a" style="left:110px;top:325px;width:28px;height:1px;background:#7a7a7a;"></div>
<div class="a t" style="left:112.78px;top:312px;font-size:12.4px;line-height:16px;color:#000;transform:scaleX(0.8800);transform-origin:0 0;">1</div>
<div class="a" style="left:138px;top:312px;width:1px;height:14px;background:#b9b9b9;"></div>
<div class="a" style="left:139px;top:312px;width:12px;height:14px;background:#ededed;"></div>
<div class="a" style="left:151px;top:312px;width:1px;height:14px;background:#b9b9b9;"></div>
<div class="a" style="left:139px;top:320px;width:12px;height:1px;background:#d0d0d0;"></div>
<svg class="a" style="left:141px;top:315px" width="7" height="11" viewBox="0 0 7 11"><path d="M0.5 3.2 L3.5 0.2 L6.5 3.2 Z M0.5 6.8 L3.5 9.8 L6.5 6.8 Z" fill="#000"/></svg>
<div class="a" style="left:155px;top:311px;width:44px;height:15px;background:#ffffff;border:1px solid #7a7a7a;border-bottom:none;"></div>
<div class="a" style="left:155px;top:325px;width:28px;height:1px;background:#7a7a7a;"></div>
<div class="a t" style="left:157.78px;top:312px;font-size:12.4px;line-height:16px;color:#000;transform:scaleX(0.8800);transform-origin:0 0;">10</div>
<div class="a" style="left:183px;top:312px;width:1px;height:14px;background:#b9b9b9;"></div>
<div class="a" style="left:184px;top:312px;width:12px;height:14px;background:#ededed;"></div>
<div class="a" style="left:196px;top:312px;width:1px;height:14px;background:#b9b9b9;"></div>
<div class="a" style="left:184px;top:320px;width:12px;height:1px;background:#d0d0d0;"></div>
<svg class="a" style="left:186px;top:315px" width="7" height="11" viewBox="0 0 7 11"><path d="M0.5 3.2 L3.5 0.2 L6.5 3.2 Z M0.5 6.8 L3.5 9.8 L6.5 6.8 Z" fill="#000"/></svg>
<div class="a" style="left:200px;top:312px;width:13px;height:13px;background:#ffffff;border:1px solid #333333;"></div>
<div class="a" style="left:238px;top:311px;width:16px;height:15px;background:#fffbe1;"></div>
<div class="a" style="left:263px;top:311px;width:16px;height:15px;background:#000000;"></div>
<div class="a t" style="left:65.48px;top:327px;font-size:12.6px;line-height:16px;color:#000;transform:scaleX(0.9524);transform-origin:0 0;font-weight:bold;">TSX</div>
<div class="a" style="left:110px;top:327px;width:44px;height:15px;background:#ffffff;border:1px solid #7a7a7a;border-bottom:none;"></div>
<div class="a" style="left:110px;top:341px;width:28px;height:1px;background:#7a7a7a;"></div>
<div class="a t" style="left:112.78px;top:328px;font-size:12.4px;line-height:16px;color:#000;transform:scaleX(0.8800);transform-origin:0 0;">1</div>
<div class="a" style="left:138px;top:328px;width:1px;height:14px;background:#b9b9b9;"></div>
<div class="a" style="left:139px;top:328px;width:12px;height:14px;background:#ededed;"></div>
<div class="a" style="left:151px;top:328px;width:1px;height:14px;background:#b9b9b9;"></div>
<div class="a" style="left:139px;top:336px;width:12px;height:1px;background:#d0d0d0;"></div>
<svg class="a" style="left:141px;top:331px" width="7" height="11" viewBox="0 0 7 11"><path d="M0.5 3.2 L3.5 0.2 L6.5 3.2 Z M0.5 6.8 L3.5 9.8 L6.5 6.8 Z" fill="#000"/></svg>
<div class="a" style="left:155px;top:327px;width:44px;height:15px;background:#ffffff;border:1px solid #7a7a7a;border-bottom:none;"></div>
<div class="a" style="left:155px;top:341px;width:28px;height:1px;background:#7a7a7a;"></div>
<div class="a t" style="left:157.78px;top:328px;font-size:12.4px;line-height:16px;color:#000;transform:scaleX(0.8800);transform-origin:0 0;">10</div>
<div class="a" style="left:183px;top:328px;width:1px;height:14px;background:#b9b9b9;"></div>
<div class="a" style="left:184px;top:328px;width:12px;height:14px;background:#ededed;"></div>
<div class="a" style="left:196px;top:328px;width:1px;height:14px;background:#b9b9b9;"></div>
<div class="a" style="left:184px;top:336px;width:12px;height:1px;background:#d0d0d0;"></div>
<svg class="a" style="left:186px;top:331px" width="7" height="11" viewBox="0 0 7 11"><path d="M0.5 3.2 L3.5 0.2 L6.5 3.2 Z M0.5 6.8 L3.5 9.8 L6.5 6.8 Z" fill="#000"/></svg>
<div class="a" style="left:200px;top:328px;width:13px;height:13px;background:#ffffff;border:1px solid #333333;"></div>
<div class="a" style="left:238px;top:327px;width:16px;height:15px;background:#fffbe1;"></div>
<div class="a" style="left:263px;top:327px;width:16px;height:15px;background:#000000;"></div>
<div class="a" style="left:359px;top:83px;width:15px;height:260px;background:#f0f0f0;"></div>
<svg class="a" style="left:357px;top:83px" width="20" height="17" viewBox="0 0 20 17"><path d="M6 11.3 L9.5 7.2 L13 11.3" stroke="#606060" stroke-width="2" fill="none"/></svg>
<div class="a" style="left:393px;top:59px;width:161px;height:314px;border:1px solid #dcdcdc;"></div>
<div class="a" style="left:400px;top:52px;width:114px;height:15px;background:#ffffff;"></div>
<div class="a t" style="left:400.16px;top:53px;font-size:11.2px;line-height:14px;color:#000;transform:scaleX(0.9328);transform-origin:0 0;">Price Level Color Bands</div>
<div class="a" style="left:403px;top:73px;width:90px;height:291px;background:#ffffff;border:1px solid #828790;"></div>
<div class="a" style="left:425px;top:74px;width:1px;height:19px;background:#e6e6e6;"></div>
<div class="a" style="left:452px;top:74px;width:1px;height:19px;background:#e6e6e6;"></div>
<div class="a" style="left:426px;top:74px;width:26px;height:18px;overflow:hidden">
<div class="a t" style="left:-2.16px;top:5px;font-size:9.6px;line-height:12px;color:#000;transform:scaleX(0.8578);transform-origin:0 0;">BGD</div>
</div>
<div class="a t" style="left:461.54px;top:79px;font-size:9.6px;line-height:12px;color:#000;transform:scaleX(0.9519);transform-origin:0 0;">Color</div>
<div class="a" style="left:426px;top:93px;width:26px;height:15px;background:#fff87a;"></div>
<div class="a" style="left:453px;top:93px;width:38px;height:15px;background:#000000;"></div>
<div class="a t" style="left:408.45px;top:96px;font-size:9.8px;line-height:12px;color:#000;transform:scaleX(0.7506);transform-origin:0 0;">1</div>
<div class="a" style="left:426px;top:109px;width:26px;height:15px;background:#ff1f1f;"></div>
<div class="a" style="left:453px;top:109px;width:38px;height:15px;background:#000000;"></div>
<div class="a t" style="left:407.81px;top:112px;font-size:9.8px;line-height:12px;color:#000;transform:scaleX(1.2110);transform-origin:0 0;">2</div>
<div class="a" style="left:426px;top:125px;width:26px;height:15px;background:#0080ff;"></div>
<div class="a" style="left:453px;top:125px;width:38px;height:15px;background:#000000;"></div>
<div class="a t" style="left:407.95px;top:128px;font-size:9.8px;line-height:12px;color:#000;transform:scaleX(1.1600);transform-origin:0 0;">3</div>
<div class="a" style="left:426px;top:141px;width:26px;height:15px;background:#00c000;"></div>
<div class="a" style="left:453px;top:141px;width:38px;height:15px;background:#000000;"></div>
<div class="a t" style="left:408.19px;top:144px;font-size:9.8px;line-height:12px;color:#000;transform:scaleX(1.0911);transform-origin:0 0;">4</div>
<div class="a" style="left:426px;top:157px;width:26px;height:15px;background:#ff00ff;"></div>
<div class="a" style="left:453px;top:157px;width:38px;height:15px;background:#000000;"></div>
<div class="a t" style="left:407.95px;top:160px;font-size:9.8px;line-height:12px;color:#000;transform:scaleX(1.1600);transform-origin:0 0;">5</div>
<div class="a" style="left:499px;top:73px;width:45px;height:290px;border:1px solid #dcdcdc;"></div>
<div class="a" style="left:563px;top:59px;width:181px;height:314px;border:1px solid #dcdcdc;"></div>
<div class="a" style="left:570px;top:52px;width:98px;height:15px;background:#ffffff;"></div>
<div class="a t" style="left:571.40px;top:53px;font-size:11.2px;line-height:14px;color:#000;transform:scaleX(0.9587);transform-origin:0 0;">Axes Color Settings</div>
<div class="a" style="left:573px;top:73px;width:110px;height:291px;background:#ffffff;border:1px solid #828790;"></div>
<div class="a" style="left:612px;top:74px;width:1px;height:19px;background:#e6e6e6;"></div>
<div class="a" style="left:651px;top:74px;width:1px;height:19px;background:#e6e6e6;"></div>
<div class="a t" style="left:586.60px;top:79px;font-size:9.6px;line-height:12px;color:#000;transform:scaleX(0.8520);transform-origin:0 0;">Axe</div>
<div class="a t" style="left:623.06px;top:79px;font-size:9.6px;line-height:12px;color:#000;transform:scaleX(0.8323);transform-origin:0 0;">BGD</div>
<div class="a" style="left:652px;top:74px;width:30px;height:18px;overflow:hidden">
<div class="a t" style="left:8.44px;top:5px;font-size:9.6px;line-height:12px;color:#000;transform:scaleX(0.9519);transform-origin:0 0;">Color</div>
</div>
<div class="a t" style="left:576.53px;top:93px;font-size:12.6px;line-height:16px;color:#000;transform:scaleX(0.8655);transform-origin:0 0;">MSCO</div>
<div class="a" style="left:613px;top:93px;width:38px;height:15px;background:#000000;"></div>
<div class="a" style="left:652px;top:93px;width:30px;height:15px;background:#f0f000;"></div>
<div class="a" style="left:574px;top:109px;width:38px;height:15px;background:#f2f2f2;"></div>
<div class="a t" style="left:576.51px;top:109px;font-size:12.6px;line-height:16px;color:#000;transform:scaleX(0.8832);transform-origin:0 0;">LEHM</div>
<div class="a" style="left:613px;top:109px;width:38px;height:15px;background:#000000;"></div>
<div class="a" style="left:652px;top:109px;width:30px;height:15px;background:#e00000;"></div>
<div class="a t" style="left:576.56px;top:125px;font-size:12.6px;line-height:16px;color:#000;transform:scaleX(0.8368);transform-origin:0 0;">BRMS</div>
<div class="a" style="left:613px;top:125px;width:38px;height:15px;background:#000000;"></div>
<div class="a" style="left:652px;top:125px;width:30px;height:15px;background:#00dd00;"></div>
<div class="a" style="left:574px;top:141px;width:38px;height:15px;background:#f2f2f2;"></div>
<div class="a t" style="left:576.85px;top:141px;font-size:12.6px;line-height:16px;color:#000;transform:scaleX(0.8763);transform-origin:0 0;">GETC</div>
<div class="a" style="left:613px;top:141px;width:38px;height:15px;background:#000000;"></div>
<div class="a" style="left:652px;top:141px;width:30px;height:15px;background:#ee82ee;"></div>
<div class="a t" style="left:577.27px;top:157px;font-size:12.6px;line-height:16px;color:#000;transform:scaleX(1.0083);transform-origin:0 0;font-weight:bold;">TIMB</div>
<div class="a" style="left:613px;top:157px;width:38px;height:15px;background:#000000;"></div>
<div class="a" style="left:652px;top:157px;width:30px;height:15px;background:#00ffff;"></div>
<div class="a" style="left:575px;top:157px;width:37px;height:15px;border:1px dotted #000;"></div>
<div class="a" style="left:574px;top:347px;width:108px;height:16px;background:#f0f0f0;"></div>
<div class="a" style="left:591px;top:347px;width:68px;height:15px;background:#cdcdcd;"></div>
<svg class="a" style="left:572px;top:344px" width="20" height="20" viewBox="0 0 20 20"><path d="M12.8 7.3 L8 10.5 L12.8 13.7" stroke="#5a5a5a" stroke-width="2" fill="none"/></svg>
<svg class="a" style="left:664px;top:344px" width="20" height="20" viewBox="0 0 20 20"><path d="M7.2 7.3 L12 10.5 L7.2 13.7" stroke="#5a5a5a" stroke-width="2" fill="none"/></svg>
<div class="a" style="left:689px;top:73px;width:45px;height:290px;border:1px solid #dcdcdc;"></div>
<div class="a" style="left:700px;top:131px;width:23px;height:21px;background:#e1e1e1;border:2px solid #0078d7;"></div>
<div class="a" style="left:708px;top:142px;width:7px;height:1px;background:#000000;"></div>
<div class="a" style="left:711px;top:139px;width:1px;height:7px;background:#000000;"></div>
<div class="a" style="left:700px;top:207px;width:23px;height:21px;background:#e1e1e1;border:1px solid #adadad;"></div>
<div class="a t" style="left:708.81px;top:210px;font-size:11.6px;line-height:14px;color:#000;transform:scaleX(0.9200);transform-origin:0 0;">-</div>
<div class="a" style="left:700px;top:283px;width:23px;height:21px;background:#e1e1e1;border:1px solid #adadad;"></div>
<div class="a t" style="left:707.93px;top:287px;font-size:11.6px;line-height:14px;color:#000;transform:scaleX(0.9200);transform-origin:0 0;">x</div>
<div class="a" style="left:53px;top:386px;width:291px;height:74px;border:1px solid #dcdcdc;"></div>
<div class="a" style="left:61px;top:379px;width:71px;height:15px;background:#ffffff;"></div>
<div class="a t" style="left:61.00px;top:380px;font-size:11.2px;line-height:14px;color:#000;transform:scaleX(0.9822);transform-origin:0 0;">Other Options</div>
<div class="a t" style="left:62.39px;top:415px;font-size:11.2px;line-height:14px;color:#000;transform:scaleX(0.9096);transform-origin:0 0;">Grid Line Color</div>
<div class="a" style="left:150px;top:411px;width:30px;height:18px;background:#d2691e;"></div>
<div class="a" style="left:180px;top:410px;width:1px;height:20px;background:#a0a0a0;"></div>
<div class="a" style="left:149px;top:429px;width:32px;height:1px;background:#a0a0a0;"></div>
<div class="a t" style="left:207.84px;top:415px;font-size:11.2px;line-height:14px;color:#000;transform:scaleX(0.9602);transform-origin:0 0;">Header</div>
<div class="a t" style="left:182.84px;top:441px;font-size:11.2px;line-height:14px;color:#000;transform:scaleX(0.9548);transform-origin:0 0;">Background</div>
<div class="a t" style="left:266.69px;top:395px;font-size:11.2px;line-height:14px;color:#000;transform:scaleX(0.9074);transform-origin:0 0;">Back</div>
<div class="a t" style="left:307.56px;top:395px;font-size:11.2px;line-height:14px;color:#000;transform:scaleX(1.0734);transform-origin:0 0;">Text</div>
<div class="a" style="left:264px;top:411px;width:30px;height:18px;background:#d3d3d3;"></div>
<div class="a" style="left:294px;top:410px;width:1px;height:20px;background:#a0a0a0;"></div>
<div class="a" style="left:263px;top:429px;width:32px;height:1px;background:#a0a0a0;"></div>
<div class="a" style="left:304px;top:411px;width:30px;height:18px;background:#000000;"></div>
<div class="a" style="left:334px;top:410px;width:1px;height:20px;background:#a0a0a0;"></div>
<div class="a" style="left:303px;top:429px;width:32px;height:1px;background:#a0a0a0;"></div>
<div class="a" style="left:264px;top:437px;width:30px;height:18px;background:#808080;"></div>
<div class="a" style="left:294px;top:436px;width:1px;height:20px;background:#a0a0a0;"></div>
<div class="a" style="left:263px;top:455px;width:32px;height:1px;background:#a0a0a0;"></div>
<div class="a" style="left:353px;top:386px;width:181px;height:74px;border:1px solid #dcdcdc;"></div>
<div class="a" style="left:361px;top:379px;width:67px;height:15px;background:#ffffff;"></div>
<div class="a t" style="left:360.65px;top:380px;font-size:11.2px;line-height:14px;color:#000;transform:scaleX(0.9494);transform-origin:0 0;">Level1 Colors</div>
<div class="a t" style="left:436.49px;top:395px;font-size:11.2px;line-height:14px;color:#000;transform:scaleX(0.9074);transform-origin:0 0;">Back</div>
<div class="a t" style="left:477.26px;top:395px;font-size:11.2px;line-height:14px;color:#000;transform:scaleX(1.0784);transform-origin:0 0;">Text</div>
<div class="a t" style="left:362.12px;top:415px;font-size:11.2px;line-height:14px;color:#000;transform:scaleX(0.9257);transform-origin:0 0;">Up Tick</div>
<div class="a t" style="left:362.06px;top:441px;font-size:11.2px;line-height:14px;color:#000;transform:scaleX(0.9402);transform-origin:0 0;">Down Tick</div>
<div class="a" style="left:434px;top:411px;width:30px;height:18px;background:#008000;"></div>
<div class="a" style="left:464px;top:410px;width:1px;height:20px;background:#a0a0a0;"></div>
<div class="a" style="left:433px;top:429px;width:32px;height:1px;background:#a0a0a0;"></div>
<div class="a" style="left:474px;top:411px;width:30px;height:18px;background:#000000;"></div>
<div class="a" style="left:504px;top:410px;width:1px;height:20px;background:#a0a0a0;"></div>
<div class="a" style="left:473px;top:429px;width:32px;height:1px;background:#a0a0a0;"></div>
<div class="a" style="left:434px;top:437px;width:30px;height:18px;background:#ff0000;"></div>
<div class="a" style="left:464px;top:436px;width:1px;height:20px;background:#a0a0a0;"></div>
<div class="a" style="left:433px;top:455px;width:32px;height:1px;background:#a0a0a0;"></div>
<div class="a" style="left:474px;top:437px;width:30px;height:18px;background:#000000;"></div>
<div class="a" style="left:504px;top:436px;width:1px;height:20px;background:#a0a0a0;"></div>
<div class="a" style="left:473px;top:455px;width:32px;height:1px;background:#a0a0a0;"></div>
<div class="a" style="left:543px;top:386px;width:201px;height:74px;border:1px solid #dcdcdc;"></div>
<div class="a" style="left:551px;top:379px;width:89px;height:15px;background:#ffffff;"></div>
<div class="a t" style="left:551.02px;top:379px;font-size:11.2px;line-height:14px;color:#000;transform:scaleX(0.9614);transform-origin:0 0;">Order Highlighting</div>
<div class="a" style="left:553px;top:404px;width:13px;height:13px;background:#ffffff;border:1px solid #333333;"></div>
<div class="a t" style="left:569.53px;top:404px;font-size:11.2px;line-height:14px;color:#000;transform:scaleX(0.9662);transform-origin:0 0;">Highlight Accepted Orders</div>
<div class="a t" style="left:626.59px;top:421px;font-size:11.2px;line-height:14px;color:#000;transform:scaleX(0.9074);transform-origin:0 0;">Back</div>
<div class="a t" style="left:667.46px;top:421px;font-size:11.2px;line-height:14px;color:#000;transform:scaleX(1.0784);transform-origin:0 0;">Text</div>
<div class="a t" style="left:552.42px;top:441px;font-size:11.2px;line-height:14px;color:#000;transform:scaleX(0.9500);transform-origin:0 0;">Order Color</div>
<div class="a" style="left:624px;top:437px;width:30px;height:18px;background:#000000;"></div>
<div class="a" style="left:654px;top:436px;width:1px;height:20px;background:#a0a0a0;"></div>
<div class="a" style="left:623px;top:455px;width:32px;height:1px;background:#a0a0a0;"></div>
<div class="a" style="left:664px;top:437px;width:30px;height:18px;background:#ffffff;"></div>
<div class="a" style="left:694px;top:436px;width:1px;height:20px;background:#a0a0a0;"></div>
<div class="a" style="left:663px;top:455px;width:32px;height:1px;background:#a0a0a0;"></div>
<div class="a" style="left:31px;top:481px;width:731px;height:70px;background:#f0f0f0;border:1px solid #dcdcdc;"></div>
<div class="a" style="left:372px;top:492px;width:114px;height:21px;background:#e1e1e1;border:1px solid #adadad;"></div>
<div class="a t" style="left:396.98px;top:496px;font-size:11.6px;line-height:14px;color:#000;transform:scaleX(0.9369);transform-origin:0 0;">Load Default</div>
<div class="a" style="left:500px;top:492px;width:113px;height:21px;background:#e1e1e1;border:1px solid #adadad;"></div>
<div class="a t" style="left:516.91px;top:496px;font-size:11.6px;line-height:14px;color:#000;transform:scaleX(0.9427);transform-origin:0 0;">Save as Default</div>
<div class="a" style="left:627px;top:492px;width:114px;height:21px;background:#e1e1e1;border:1px solid #adadad;"></div>
<div class="a t" style="left:669.85px;top:496px;font-size:11.6px;line-height:14px;color:#000;transform:scaleX(0.9207);transform-origin:0 0;">Apply</div>
<div class="a" style="left:500px;top:527px;width:113px;height:21px;background:#e1e1e1;border:1px solid #adadad;"></div>
<div class="a t" style="left:548.30px;top:531px;font-size:11.6px;line-height:14px;color:#000;transform:scaleX(0.8621);transform-origin:0 0;">OK</div>
<div class="a" style="left:627px;top:527px;width:114px;height:21px;background:#e1e1e1;border:1px solid #adadad;"></div>
<div class="a t" style="left:666.87px;top:531px;font-size:11.6px;line-height:14px;color:#000;transform:scaleX(0.9096);transform-origin:0 0;">Cancel</div>
<div class="a" style="left:218px;top:133px;width:316px;height:247px;background:#f0f0f0;border:1px solid #5f5f5f;"></div>
<div class="a" style="left:219px;top:134px;width:314px;height:31px;background:#ffffff;"></div>
<svg class="a" style="left:226px;top:140px" width="17" height="15" viewBox="0 0 17 15">
<rect x="1" y="1" width="15" height="13" fill="#ffffff"/>
<path d="M1 1.5 L14 1.5 Q15.5 1.5 15.5 3 L15.5 12 Q15.5 13.5 14 13.5 L1 13.5" fill="none" stroke="#6a6a6a" stroke-width="1"/>
<rect x="2" y="2" width="0.8" height="11" fill="#c8c8f0"/>
<rect x="3" y="4" width="5.6" height="2" fill="#3a70b2"/><rect x="3" y="6" width="5.6" height="2" fill="#3b84a0"/><rect x="3" y="8" width="5.6" height="2" fill="#3d9a80"/><rect x="3" y="10" width="5.6" height="2" fill="#3fb060"/>
<rect x="9" y="10" width="3" height="2" fill="#b8b8b8"/>
<rect x="13" y="4" width="1" height="2" fill="#3a70b2"/><rect x="13" y="6" width="1" height="2" fill="#3fa868"/>
</svg>
<div class="a t" style="left:245.71px;top:141px;font-size:12.6px;line-height:16px;color:#000;transform:scaleX(0.9405);transform-origin:0 0;">Color Selector</div>
<svg class="a" style="left:511px;top:142px" width="13" height="12" viewBox="0 0 13 12">
<path d="M2.3 1.5 L11.7 10.9 M11.7 1.5 L2.3 10.9" stroke="#000" stroke-width="1.05" fill="none"/></svg>
<div class="a" style="left:222px;top:180px;width:309px;height:166px;background:#ffffff;border:1px solid #dcdcdc;"></div>
<svg class="a" style="left:219px;top:163px" width="170" height="19" viewBox="0 0 170 19">
<path d="M60.5 17.5 L65.5 7 Q67.5 4.5 71.5 4.5 L96 4.5 Q100 4.5 101.5 7.5 L104.5 17.5" fill="#f0f0f0" stroke="#222" stroke-width="1.15"/>
<path d="M105.5 17.5 L110.5 7 Q112.5 4.5 116.5 4.5 L157 4.5 Q161 4.5 162.5 7.5 L165 17.5" fill="#f0f0f0" stroke="#222" stroke-width="1.15"/>
<rect x="3.5" y="17" width="163" height="1" fill="#dcdcdc"/>
<path d="M2.5 18 L7.5 6 Q9.5 3.5 13.5 3.5 L51 3.5 Q55 3.5 56.5 6.5 L59.5 17.5" fill="#ffffff" stroke="#222" stroke-width="1.15"/>
<rect x="3.2" y="17" width="55.6" height="2" fill="#ffffff"/>
</svg>
<div class="a t" style="left:231.19px;top:167px;font-size:11.2px;line-height:14px;color:#000;transform:scaleX(1.0110);transform-origin:0 0;">Palette</div>
<div class="a t" style="left:290.45px;top:167px;font-size:11.2px;line-height:14px;color:#000;transform:scaleX(0.9646);transform-origin:0 0;">Web</div>
<div class="a t" style="left:336.06px;top:167px;font-size:11.2px;line-height:14px;color:#000;transform:scaleX(0.9626);transform-origin:0 0;">Custom</div>
<div class="a" style="left:235px;top:191px;width:282px;height:142px;background:#ffffff;border:1px solid #808080;"></div>
<div class="a" style="left:236px;top:192px;width:20px;height:20px;background:#ffc0c0;"></div>
<div class="a" style="left:256px;top:192px;width:20px;height:20px;background:#edd1c0;"></div>
<div class="a" style="left:276px;top:192px;width:20px;height:20px;background:#dedcc0;"></div>
<div class="a" style="left:296px;top:192px;width:20px;height:20px;background:#d1ecc0;"></div>
<div class="a" style="left:316px;top:192px;width:20px;height:20px;background:#c0ffc0;"></div>
<div class="a" style="left:336px;top:192px;width:20px;height:20px;background:#c0edd1;"></div>
<div class="a" style="left:356px;top:192px;width:20px;height:20px;background:#c0dee0;"></div>
<div class="a" style="left:376px;top:192px;width:20px;height:20px;background:#c0d1ed;"></div>
<div class="a" style="left:396px;top:192px;width:20px;height:20px;background:#c0c0ff;"></div>
<div class="a" style="left:416px;top:192px;width:20px;height:20px;background:#d1c0ed;"></div>
<div class="a" style="left:436px;top:192px;width:20px;height:20px;background:#dec0e0;"></div>
<div class="a" style="left:456px;top:192px;width:20px;height:20px;background:#edc0d1;"></div>
<div class="a" style="left:476px;top:192px;width:20px;height:20px;background:#ffc0c0;"></div>
<div class="a" style="left:496px;top:192px;width:20px;height:20px;background:#ffffff;"></div>
<div class="a" style="left:236px;top:212px;width:20px;height:20px;background:#ff8080;"></div>
<div class="a" style="left:256px;top:212px;width:20px;height:20px;background:#f2b680;"></div>
<div class="a" style="left:276px;top:212px;width:20px;height:20px;background:#e8e480;"></div>
<div class="a" style="left:296px;top:212px;width:20px;height:20px;background:#b6f080;"></div>
<div class="a" style="left:316px;top:212px;width:20px;height:20px;background:#80ff80;"></div>
<div class="a" style="left:336px;top:212px;width:20px;height:20px;background:#80f2b6;"></div>
<div class="a" style="left:356px;top:212px;width:20px;height:20px;background:#80e8e8;"></div>
<div class="a" style="left:376px;top:212px;width:20px;height:20px;background:#80b6f2;"></div>
<div class="a" style="left:396px;top:212px;width:20px;height:20px;background:#8080ff;"></div>
<div class="a" style="left:416px;top:212px;width:20px;height:20px;background:#b680f2;"></div>
<div class="a" style="left:436px;top:212px;width:20px;height:20px;background:#e880e8;"></div>
<div class="a" style="left:456px;top:212px;width:20px;height:20px;background:#f280b6;"></div>
<div class="a" style="left:476px;top:212px;width:20px;height:20px;background:#ff8080;"></div>
<div class="a" style="left:496px;top:212px;width:20px;height:20px;background:#d3d3d3;"></div>
<div class="a" style="left:236px;top:232px;width:20px;height:20px;background:#ff4040;"></div>
<div class="a" style="left:256px;top:232px;width:20px;height:20px;background:#ff9c40;"></div>
<div class="a" style="left:276px;top:232px;width:20px;height:20px;background:#f5f040;"></div>
<div class="a" style="left:296px;top:232px;width:20px;height:20px;background:#9cf540;"></div>
<div class="a" style="left:316px;top:232px;width:20px;height:20px;background:#40ff40;"></div>
<div class="a" style="left:336px;top:232px;width:20px;height:20px;background:#40f59c;"></div>
<div class="a" style="left:356px;top:232px;width:20px;height:20px;background:#40f5f5;"></div>
<div class="a" style="left:376px;top:232px;width:20px;height:20px;background:#409cff;"></div>
<div class="a" style="left:396px;top:232px;width:20px;height:20px;background:#4040ff;"></div>
<div class="a" style="left:416px;top:232px;width:20px;height:20px;background:#9c40f5;"></div>
<div class="a" style="left:436px;top:232px;width:20px;height:20px;background:#f540f5;"></div>
<div class="a" style="left:456px;top:232px;width:20px;height:20px;background:#ff409c;"></div>
<div class="a" style="left:476px;top:232px;width:20px;height:20px;background:#ff4040;"></div>
<div class="a" style="left:496px;top:232px;width:20px;height:20px;background:#a9a9a9;"></div>
<div class="a" style="left:236px;top:252px;width:20px;height:20px;background:#ff0000;"></div>
<div class="a" style="left:256px;top:252px;width:20px;height:20px;background:#ff8000;"></div>
<div class="a" style="left:276px;top:252px;width:20px;height:20px;background:#ffff00;"></div>
<div class="a" style="left:296px;top:252px;width:20px;height:20px;background:#80ff00;"></div>
<div class="a" style="left:316px;top:252px;width:20px;height:20px;background:#00ff00;"></div>
<div class="a" style="left:336px;top:252px;width:20px;height:20px;background:#00ff80;"></div>
<div class="a" style="left:356px;top:252px;width:20px;height:20px;background:#00ffff;"></div>
<div class="a" style="left:376px;top:252px;width:20px;height:20px;background:#0080ff;"></div>
<div class="a" style="left:396px;top:252px;width:20px;height:20px;background:#0000ff;"></div>
<div class="a" style="left:416px;top:252px;width:20px;height:20px;background:#8000ff;"></div>
<div class="a" style="left:436px;top:252px;width:20px;height:20px;background:#ff00ff;"></div>
<div class="a" style="left:456px;top:252px;width:20px;height:20px;background:#ff0080;"></div>
<div class="a" style="left:476px;top:252px;width:20px;height:20px;background:#ff0000;"></div>
<div class="a" style="left:496px;top:252px;width:20px;height:20px;background:#808080;"></div>
<div class="a" style="left:236px;top:272px;width:20px;height:20px;background:#c00000;"></div>
<div class="a" style="left:256px;top:272px;width:20px;height:20px;background:#c06000;"></div>
<div class="a" style="left:276px;top:272px;width:20px;height:20px;background:#c0c000;"></div>
<div class="a" style="left:296px;top:272px;width:20px;height:20px;background:#60c000;"></div>
<div class="a" style="left:316px;top:272px;width:20px;height:20px;background:#00c000;"></div>
<div class="a" style="left:336px;top:272px;width:20px;height:20px;background:#00c060;"></div>
<div class="a" style="left:356px;top:272px;width:20px;height:20px;background:#00c0c0;"></div>
<div class="a" style="left:376px;top:272px;width:20px;height:20px;background:#0060c0;"></div>
<div class="a" style="left:396px;top:272px;width:20px;height:20px;background:#0000c0;"></div>
<div class="a" style="left:416px;top:272px;width:20px;height:20px;background:#6000c0;"></div>
<div class="a" style="left:436px;top:272px;width:20px;height:20px;background:#c000c0;"></div>
<div class="a" style="left:456px;top:272px;width:20px;height:20px;background:#c00060;"></div>
<div class="a" style="left:476px;top:272px;width:20px;height:20px;background:#c00000;"></div>
<div class="a" style="left:496px;top:272px;width:20px;height:20px;background:#555555;"></div>
<div class="a" style="left:236px;top:292px;width:20px;height:20px;background:#800000;"></div>
<div class="a" style="left:256px;top:292px;width:20px;height:20px;background:#804000;"></div>
<div class="a" style="left:276px;top:292px;width:20px;height:20px;background:#808000;"></div>
<div class="a" style="left:296px;top:292px;width:20px;height:20px;background:#408000;"></div>
<div class="a" style="left:316px;top:292px;width:20px;height:20px;background:#008000;"></div>
<div class="a" style="left:336px;top:292px;width:20px;height:20px;background:#008040;"></div>
<div class="a" style="left:356px;top:292px;width:20px;height:20px;background:#008080;"></div>
<div class="a" style="left:376px;top:292px;width:20px;height:20px;background:#004080;"></div>
<div class="a" style="left:396px;top:292px;width:20px;height:20px;background:#000080;"></div>
<div class="a" style="left:416px;top:292px;width:20px;height:20px;background:#400080;"></div>
<div class="a" style="left:436px;top:292px;width:20px;height:20px;background:#800080;"></div>
<div class="a" style="left:456px;top:292px;width:20px;height:20px;background:#800040;"></div>
<div class="a" style="left:476px;top:292px;width:20px;height:20px;background:#800000;"></div>
<div class="a" style="left:496px;top:292px;width:20px;height:20px;background:#2b2b2b;"></div>
<div class="a" style="left:236px;top:312px;width:20px;height:20px;background:#400000;"></div>
<div class="a" style="left:256px;top:312px;width:20px;height:20px;background:#402000;"></div>
<div class="a" style="left:276px;top:312px;width:20px;height:20px;background:#404000;"></div>
<div class="a" style="left:296px;top:312px;width:20px;height:20px;background:#204000;"></div>
<div class="a" style="left:316px;top:312px;width:20px;height:20px;background:#004000;"></div>
<div class="a" style="left:336px;top:312px;width:20px;height:20px;background:#004020;"></div>
<div class="a" style="left:356px;top:312px;width:20px;height:20px;background:#004040;"></div>
<div class="a" style="left:376px;top:312px;width:20px;height:20px;background:#002040;"></div>
<div class="a" style="left:396px;top:312px;width:20px;height:20px;background:#000040;"></div>
<div class="a" style="left:416px;top:312px;width:20px;height:20px;background:#200040;"></div>
<div class="a" style="left:436px;top:312px;width:20px;height:20px;background:#400040;"></div>
<div class="a" style="left:456px;top:312px;width:20px;height:20px;background:#400020;"></div>
<div class="a" style="left:476px;top:312px;width:20px;height:20px;background:#400000;"></div>
<div class="a" style="left:496px;top:312px;width:20px;height:20px;background:#000000;"></div>
<div class="a" style="left:335px;top:191px;width:22px;height:22px;border:1px solid #ff0000;"></div>
<div class="a" style="left:246px;top:351px;width:101px;height:25px;background:#e1e1e1;border:1px solid #e81123;box-shadow:inset 0 0 0 2px #0078d7;"></div>
<div class="a t" style="left:289.10px;top:357px;font-size:11.6px;line-height:14px;color:#000;transform:scaleX(0.8621);transform-origin:0 0;">OK</div>
<div class="a" style="left:356px;top:351px;width:40px;height:25px;background:#d2691e;border:1px solid #a0a0a0;border-left-color:#c8c8c8;border-top-color:#c8c8c8;"></div>
<div class="a" style="left:407px;top:352px;width:99px;height:23px;background:#e1e1e1;border:1px solid #adadad;"></div>
<div class="a t" style="left:440.17px;top:357px;font-size:11.6px;line-height:14px;color:#000;transform:scaleX(0.9096);transform-origin:0 0;">Cancel</div>
</body></html>
